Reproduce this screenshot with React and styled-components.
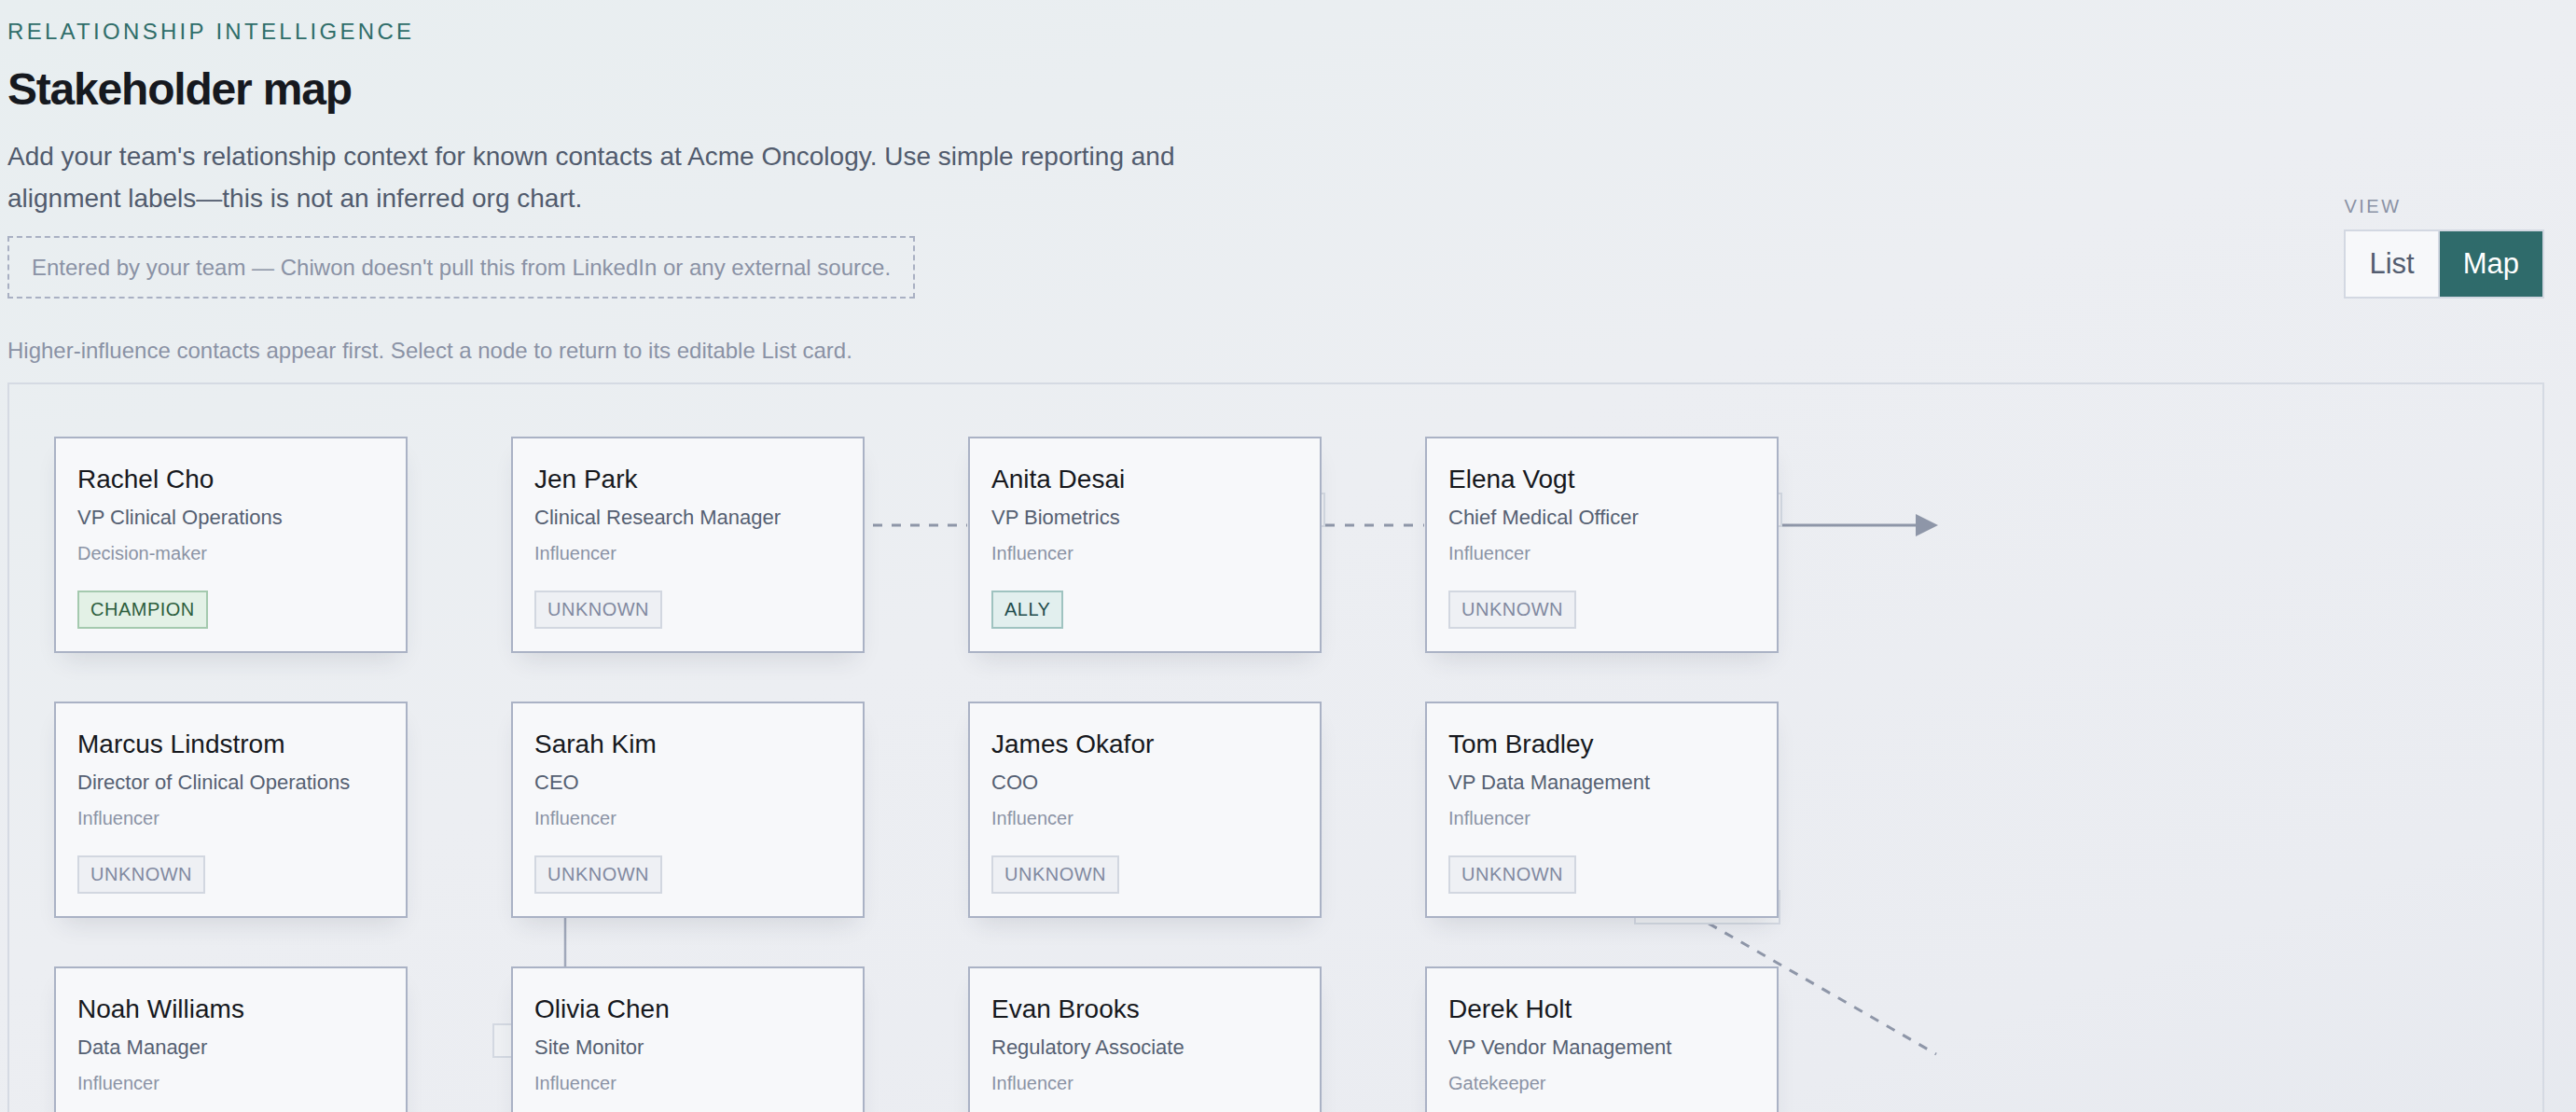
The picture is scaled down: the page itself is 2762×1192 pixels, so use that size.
import React from 'react';
import styled, { createGlobalStyle, css } from 'styled-components';

const GlobalStyle = createGlobalStyle`
    html, body {
        margin: 0;
        padding: 0;
        overflow: hidden;
    }
    body {
        font-family: "Liberation Sans", Arial, Helvetica, sans-serif;
        background: linear-gradient(160deg, #e8eef0 0%, #eceef2 45%, #eaecf1 80%, #e5e8ee 100%);
        color: #16191f;
        min-height: 100vh;
    }
    * {
        box-sizing: border-box;
    }
`;

const Page = styled.div`
    padding: 20px 34px 0 8px;
`;

const Header = styled.header`
    display: flex;
    justify-content: space-between;
    align-items: flex-end;
`;

const Intro = styled.div`
    display: flex;
    flex-direction: column;
    align-items: flex-start;
`;

const Eyebrow = styled.div`
    font-size: 24px;
    line-height: 28px;
    letter-spacing: 3.3px;
    color: #2f6d69;
`;

const Title = styled.h1`
    margin: 19px 0 0;
    font-size: 48px;
    line-height: 58px;
    font-weight: 700;
    letter-spacing: -1.2px;
    color: #16191f;
`;

const Lead = styled.p`
    margin: 20px 0 0;
    max-width: 1310px;
    font-size: 28px;
    line-height: 45px;
    color: #515b6d;
`;

const Note = styled.div`
    margin-top: 18px;
    padding: 18px 24px 17px;
    border: 2px dashed #a9b0c3;
    font-size: 24px;
    line-height: 28px;
    color: #8a92a5;
`;

const ViewControl = styled.div`
    display: flex;
    flex-direction: column;
    align-items: flex-start;
`;

const ViewLabel = styled.div`
    margin-bottom: 13px;
    font-size: 20px;
    line-height: 24px;
    letter-spacing: 2.5px;
    color: #8a92a5;
`;

const Toggle = styled.div`
    display: flex;
    border: 2px solid #d3d8e2;
`;

const ToggleButton = styled.button`
    border: 0;
    margin: 0;
    padding: 0 25px;
    font-family: inherit;
    font-size: 31px;
    line-height: 70px;
    cursor: pointer;
    background: #f7f8fa;
    color: #535d70;
    & + & {
        border-left: 2px solid #d3d8e2;
    }
    ${p => p.$active && css`
        background: #2f6b6b;
        color: #ffffff;
    `}
`;

const Hint = styled.div`
    margin-top: 42px;
    font-size: 24px;
    line-height: 28px;
    color: #8a92a5;
`;

const Canvas = styled.section`
    position: relative;
    margin-top: 20px;
    border: 2px solid #d5dae3;
    padding: 56px 0 56px 48px;
`;

const Edges = styled.svg`
    position: absolute;
    top: 0;
    left: 0;
    width: 100%;
    height: 100%;
    overflow: visible;
    z-index: 0;
`;

const EdgeLabel = styled.div`
    position: absolute;
    left: ${p => p.$x}px;
    top: ${p => p.$y}px;
    width: 157px;
    height: 37px;
    border: 2px solid #d3d8e1;
    background: #eef0f3;
    z-index: 1;
`;

const CardGrid = styled.div`
    position: relative;
    z-index: 2;
    display: grid;
    grid-template-columns: repeat(4, 379px);
    grid-auto-rows: 232px;
    column-gap: 111px;
    row-gap: 52px;
`;

const Card = styled.div`
    display: flex;
    flex-direction: column;
    align-items: flex-start;
    padding: 27px 23px;
    background: #f7f8fa;
    border: 2px solid #aab2c5;
    box-shadow: 0 14px 26px -10px rgba(40, 50, 70, 0.14);
    cursor: pointer;
`;

const Name = styled.div`
    font-size: 28px;
    line-height: 34px;
    color: #16181d;
`;

const JobTitle = styled.div`
    margin-top: 9px;
    font-size: 22px;
    line-height: 30px;
    color: #556072;
`;

const Influence = styled.div`
    margin-top: 10px;
    font-size: 20px;
    line-height: 26px;
    color: #8b93a5;
`;

const badgeTones = {
    champion: css`
        background: #e3f1e6;
        border-color: #a4c9ae;
        color: #2d5e3d;
    `,
    ally: css`
        background: #e2efee;
        border-color: #9fc3c0;
        color: #1f4c4c;
    `,
    unknown: css`
        background: #eef0f4;
        border-color: #d2d7e0;
        color: #8189a0;
    `,
};

const Badge = styled.span`
    margin-top: 27px;
    padding: 6px 12px;
    border: 2px solid;
    font-size: 20px;
    line-height: 25px;
    letter-spacing: 0.5px;
    ${p => badgeTones[p.$tone]}
`;

const contacts = [
    { name: 'Rachel Cho', title: 'VP Clinical Operations', role: 'Decision-maker', alignment: 'champion' },
    { name: 'Jen Park', title: 'Clinical Research Manager', role: 'Influencer', alignment: 'unknown' },
    { name: 'Anita Desai', title: 'VP Biometrics', role: 'Influencer', alignment: 'ally' },
    { name: 'Elena Vogt', title: 'Chief Medical Officer', role: 'Influencer', alignment: 'unknown' },
    { name: 'Marcus Lindstrom', title: 'Director of Clinical Operations', role: 'Influencer', alignment: 'unknown' },
    { name: 'Sarah Kim', title: 'CEO', role: 'Influencer', alignment: 'unknown' },
    { name: 'James Okafor', title: 'COO', role: 'Influencer', alignment: 'unknown' },
    { name: 'Tom Bradley', title: 'VP Data Management', role: 'Influencer', alignment: 'unknown' },
    { name: 'Noah Williams', title: 'Data Manager', role: 'Influencer', alignment: 'unknown' },
    { name: 'Olivia Chen', title: 'Site Monitor', role: 'Influencer', alignment: 'unknown' },
    { name: 'Evan Brooks', title: 'Regulatory Associate', role: 'Influencer', alignment: 'unknown' },
    { name: 'Derek Holt', title: 'VP Vendor Management', role: 'Gatekeeper', alignment: 'unknown' },
];

// label boxes that sit on the edges, mostly tucked under the nodes
const edgeLabels = [
    { x: 1254, y: 116 },
    { x: 1744, y: 116 },
    { x: 1742, y: 542 },
    { x: 518, y: 685 },
];

const EDGE = '#8e96a8';

const App = () => (
    <>
        <GlobalStyle />
        <Page>
            <Header>
                <Intro>
                    <Eyebrow>RELATIONSHIP INTELLIGENCE</Eyebrow>
                    <Title>Stakeholder map</Title>
                    <Lead>
                        Add your team's relationship context for known contacts at Acme Oncology. Use simple reporting and alignment labels—this is not an inferred org chart.
                    </Lead>
                    <Note>Entered by your team — Chiwon doesn't pull this from LinkedIn or any external source.</Note>
                </Intro>
                <ViewControl>
                    <ViewLabel>VIEW</ViewLabel>
                    <Toggle>
                        <ToggleButton>List</ToggleButton>
                        <ToggleButton $active>Map</ToggleButton>
                    </Toggle>
                </ViewControl>
            </Header>

            <Hint>Higher-influence contacts appear first. Select a node to return to its editable List card.</Hint>

            <Canvas>
                <Edges>
                    <line x1="926" y1="151" x2="1027" y2="151" stroke={EDGE} strokeWidth="3" strokeDasharray="10 10" />
                    <line x1="1411" y1="151" x2="1517" y2="151" stroke={EDGE} strokeWidth="3" strokeDasharray="10 11" />
                    <line x1="1897" y1="151" x2="2046" y2="151" stroke={EDGE} strokeWidth="3" />
                    <polygon points="2044,139 2068,151 2044,163" fill={EDGE} />
                    <line x1="596" y1="570" x2="596" y2="625" stroke="#a0a8ba" strokeWidth="2.5" />
                    <line x1="1770" y1="548" x2="2066" y2="718" stroke={EDGE} strokeWidth="3" strokeDasharray="10 10" />
                </Edges>
                {edgeLabels.map((l, i) => (
                    <EdgeLabel key={i} $x={l.x} $y={l.y} />
                ))}
                <CardGrid>
                    {contacts.map(c => (
                        <Card key={c.name}>
                            <Name>{c.name}</Name>
                            <JobTitle>{c.title}</JobTitle>
                            <Influence>{c.role}</Influence>
                            <Badge $tone={c.alignment}>{c.alignment.toUpperCase()}</Badge>
                        </Card>
                    ))}
                </CardGrid>
            </Canvas>
        </Page>
    </>
);

export default App;
